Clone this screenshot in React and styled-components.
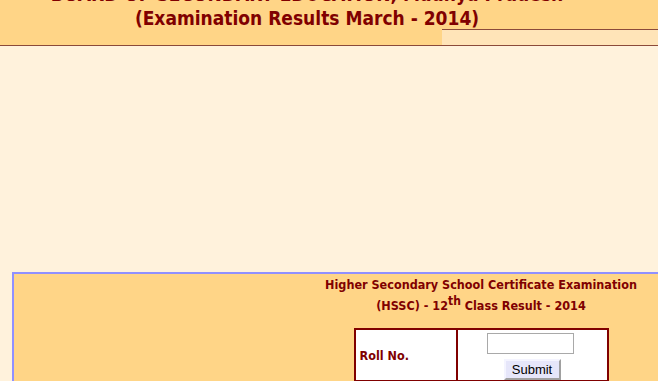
import React from 'react';
import styled, { createGlobalStyle } from 'styled-components';

const GlobalStyle = createGlobalStyle`
  html, body {
    margin: 0;
    padding: 0;
    overflow: hidden;
    background: #fff2dc;
  }
  body {
    font-family: 'DejaVu Sans Condensed', 'DejaVu Sans', sans-serif;
    color: #800000;
  }
`;

const Header = styled.header`
  background: #ffd587;
  border-bottom: 1px solid #8b4a3a;
  margin-top: -20px;
`;

const Title = styled.h1`
  width: 614px;
  margin: 0;
  padding-top: 2px;
  text-align: center;
  font-size: 19px;
  line-height: 24px;
  font-weight: bold;
  color: #800000;
`;

const SubBar = styled.div`
  display: flex;
  justify-content: flex-end;
  margin-top: -1px;
`;

const LightBox = styled.div`
  width: 216px;
  height: 15px;
  background: #ffe4b8;
  border-top: 1px solid #8b4a3a;
`;

const Main = styled.main`
  padding: 226px 0 0 12px;
`;

const Panel = styled.section`
  width: 700px;
  height: 200px;
  display: grid;
  grid-template-columns: 300px 334px;
  background: #ffd587;
  border: 2px solid #9090ff;
`;

const ResultCell = styled.div`
  grid-column: 2;
  display: flex;
  flex-direction: column;
  align-items: center;
`;

const Heading = styled.h2`
  margin: 0;
  font-size: 12.5px;
  line-height: 21px;
  font-weight: bold;
  text-align: center;
  white-space: nowrap;
  sup {
    font-size: 12px;
    line-height: 0;
  }
`;

const FormTable = styled.table`
  margin-top: 12px;
  border-collapse: collapse;
  border: 2px solid #800000;
  background: #fff;
`;

const LabelCell = styled.td`
  width: 96px;
  height: 50px;
  padding: 0 0 0 4px;
  border-right: 2px solid #800000;
  font-size: 12.5px;
  font-weight: bold;
  color: #800000;
  vertical-align: middle;
`;

const FieldCell = styled.td`
  width: 149px;
  padding: 3px 0 0;
  text-align: center;
  vertical-align: top;
`;

const RollInput = styled.input`
  display: block;
  width: 83px;
  height: 17px;
  margin: 0 auto 0 29px;
  padding: 1px;
  border: 1px solid #a9a9a9;
  background: #fff;
`;

const SubmitButton = styled.button`
  display: block;
  margin: 5px 0 0 46px;
  width: 57px;
  height: 21px;
  padding: 0;
  font-family: 'Liberation Sans', Arial, sans-serif;
  font-size: 13px;
  color: #000;
  background: #e6e6fa;
  border: 2px solid;
  border-color: #f4f4ff #a0a0a0 #a0a0a0 #f4f4ff;
`;

export default function App() {
  return (
    <>
      <GlobalStyle />
      <Header>
        <Title>
          BOARD OF SECONDARY EDUCATION, Madhya Pradesh
          <br />
          (Examination Results March - 2014)
        </Title>
        <SubBar>
          <LightBox />
        </SubBar>
      </Header>
      <Main>
        <Panel>
          <ResultCell>
            <Heading>Higher Secondary School Certificate Examination</Heading>
            <Heading>
              (HSSC) - 12<sup>th</sup> Class Result - 2014
            </Heading>
            <FormTable>
              <tbody>
                <tr>
                  <LabelCell>Roll No.</LabelCell>
                  <FieldCell>
                    <RollInput type="text" />
                    <SubmitButton type="button">Submit</SubmitButton>
                  </FieldCell>
                </tr>
              </tbody>
            </FormTable>
          </ResultCell>
        </Panel>
      </Main>
    </>
  );
}
